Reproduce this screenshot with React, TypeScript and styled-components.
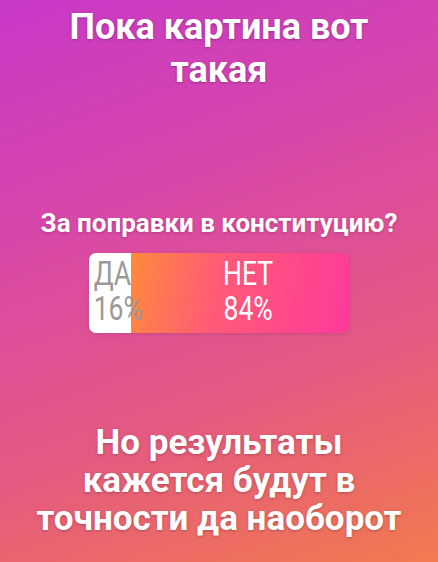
import styled, {createGlobalStyle} from 'styled-components';

const GlobalStyle = createGlobalStyle`
  html, body {
    margin: 0;
    padding: 0;
  }

  body {
    font-family: Roboto, "Noto Sans", sans-serif;
  }
`;

const poll = {
    question: 'За поправки в конституцию?',
    yes: {label: 'ДА', percent: 16},
    no: {label: 'НЕТ', percent: 84},
};

function App() {
    return (
        <Story>
            <GlobalStyle/>
            <Heading>Пока картина вот такая</Heading>
            <Poll>
                <Question>{poll.question}</Question>
                <Bar>
                    <YesPart style={{width: `${poll.yes.percent}%`}}>
                        <Answer $muted>
                            <span>{poll.yes.label}</span>
                            <span>{poll.yes.percent}%</span>
                        </Answer>
                    </YesPart>
                    <NoPart>
                        <Answer>
                            <span>{poll.no.label}</span>
                            <span>{poll.no.percent}%</span>
                        </Answer>
                    </NoPart>
                </Bar>
            </Poll>
            <Footer>Но результаты кажется будут в точности да наоборот</Footer>
        </Story>
    );
}

export default App;

const Story = styled.div`
  width: 438px;
  height: 562px;
  box-sizing: border-box;
  overflow: hidden;
  display: flex;
  flex-direction: column;
  align-items: center;
  background: linear-gradient(160deg, #c838c8 0%, #d848a8 35%, #e45a80 68%, #f27a4e 100%);
  color: #fff;
`;

const Heading = styled.h1`
  margin: 6px 0 0;
  width: 330px;
  font-size: 36px;
  font-weight: 700;
  line-height: 43px;
  text-align: center;
  text-shadow: 0 1px 3px rgba(0, 0, 0, 0.25);
`;

const Poll = styled.section`
  margin-top: 116px;
  display: flex;
  flex-direction: column;
  align-items: center;
`;

const Question = styled.h2`
  margin: 0;
  font-size: 26px;
  font-weight: 700;
  line-height: 30px;
  text-shadow: 0 1px 3px rgba(0, 0, 0, 0.2);
`;

const Bar = styled.div`
  margin-top: 15px;
  width: 260px;
  height: 80px;
  display: flex;
  border-radius: 7px;
  overflow: hidden;
  box-shadow: 0 1px 4px rgba(0, 0, 0, 0.12);
`;

const YesPart = styled.div`
  position: relative;
  background: #fff;
  flex-shrink: 0;
`;

const NoPart = styled.div`
  flex: 1;
  display: flex;
  justify-content: center;
  padding-left: 16px;
  background: linear-gradient(100deg, #ff8a3c 0%, #ff5a78 40%, #ff3a9a 100%);
`;

const Answer = styled.div<{ $muted?: boolean }>`
  display: flex;
  flex-direction: column;
  align-items: ${p => (p.$muted ? 'flex-start' : 'center')};
  padding: ${p => (p.$muted ? '3px 0 0 6px' : '3px 0 0')};
  color: ${p => (p.$muted ? '#9a9a9a' : '#fff')};
  font-family: Roboto, sans-serif;
  font-weight: 400;
  font-size: 34px;
  line-height: 35px;
  white-space: nowrap;
  transform: scaleX(0.78);
  transform-origin: ${p => (p.$muted ? 'left top' : 'center top')};
  position: ${p => (p.$muted ? 'relative' : 'static')};
  z-index: 1;
`;

const Footer = styled.p`
  margin: 91px 0 0;
  width: 372px;
  font-size: 35px;
  font-weight: 700;
  line-height: 38px;
  text-align: center;
  text-shadow: 0 1px 3px rgba(0, 0, 0, 0.25);
`;
